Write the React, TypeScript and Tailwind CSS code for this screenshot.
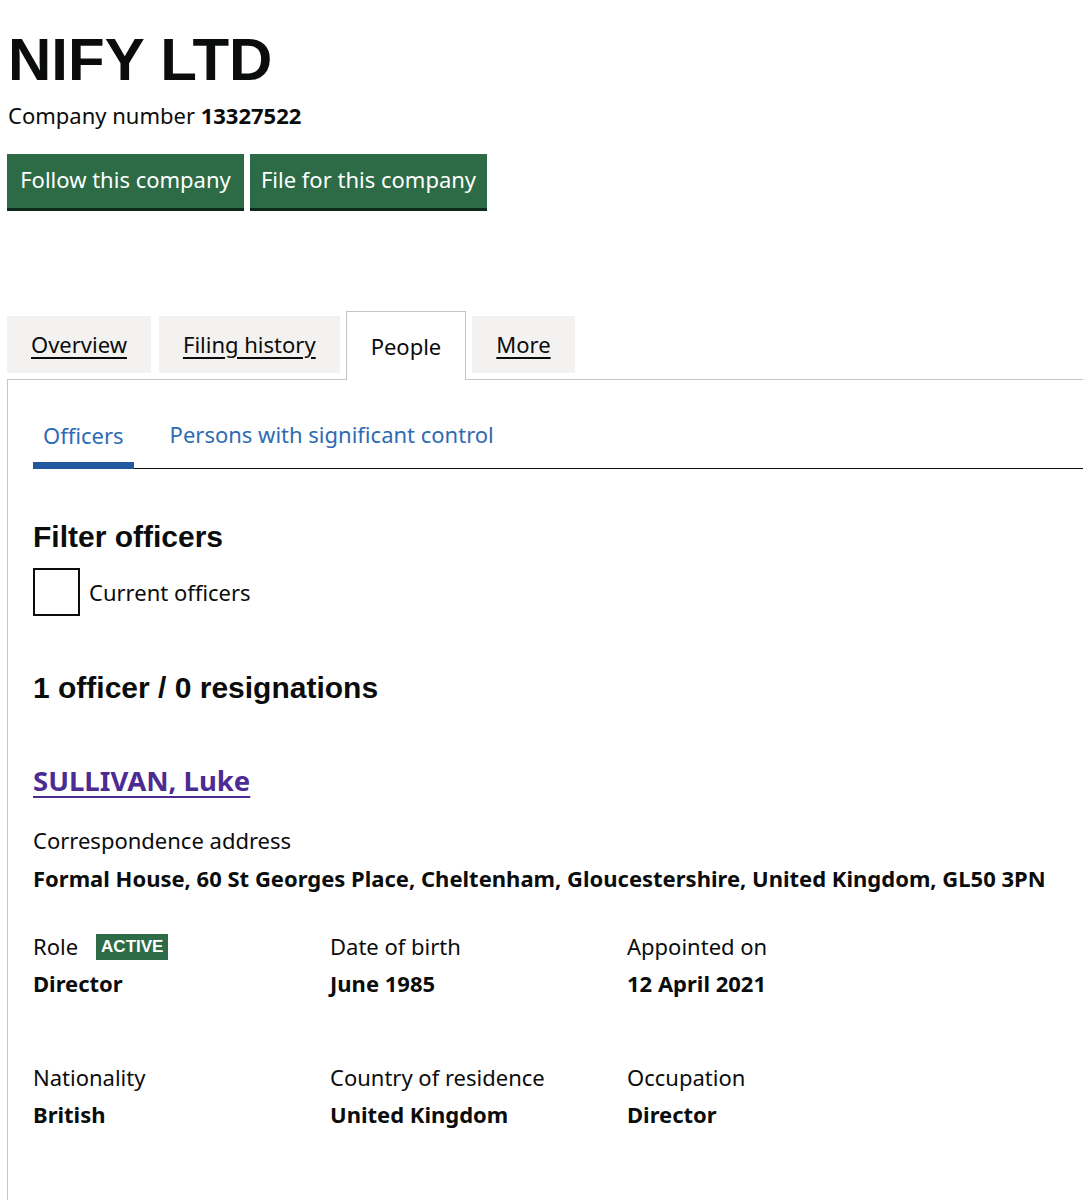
import React from "react";

const body = { fontFamily: '"Noto Sans", "Open Sans", Arial, sans-serif' };
const heading = { fontFamily: '"Liberation Sans", Arial, sans-serif' };

function Detail({ label, value, badge }: { label: string; value: string; badge?: boolean }) {
    return (
        <div>
            <div className="flex items-center gap-[18px] text-[22px] leading-[30px] text-[#0b0c0c]">
                {label}
                {badge && (
                    <span
                        className="mt-[2px] bg-[#2c6b45] px-[5px] text-[17px] font-bold leading-[26px] text-white"
                        style={heading}
                    >
                        ACTIVE
                    </span>
                )}
            </div>
            <div className="mt-[7px] text-[22px] font-bold leading-[30px] text-[#0b0c0c]">{value}</div>
        </div>
    );
}

export default function App() {
    const tabs = ["Overview", "Filing history", "People", "More"];

    return (
        <div className="min-h-[1200px] bg-white pl-[7px] text-[#0b0c0c]" style={body}>
            <h1 className="pt-[30px] pl-[1px] text-[60px] font-bold leading-[60px]" style={heading}>
                NIFY LTD
            </h1>
            <p className="mt-[10px] pl-[1px] text-[22px] leading-[30px]">
                Company number <span className="font-bold">13327522</span>
            </p>

            <div className="mt-[24px] flex gap-[6px]">
                {["Follow this company", "File for this company"].map((label) => (
                    <button
                        key={label}
                        className="h-[54px] w-[237px] bg-[#2c6b45] pb-[3px] text-[22px] text-white shadow-[0_3px_0_#0b2a19]"
                    >
                        {label}
                    </button>
                ))}
            </div>

            {/* tabs */}
            <div className="mt-[103px] flex items-end gap-[6px]">
                {tabs.map((t, i) =>
                    t === "People" ? (
                        <div
                            key={t}
                            className="relative -mb-[1px] flex h-[69px] items-center border-[1.5px] border-b-0 border-[#c6c6c6] bg-white px-[24px] pt-[1px] text-[22px]"
                        >
                            {t}
                        </div>
                    ) : (
                        <div
                            key={t}
                            className={`mb-[6px] flex h-[57px] items-center bg-[#f3f2f1] px-[24px] text-[22px] underline decoration-[1.5px] underline-offset-[4px] ${i === 1 ? "ml-[2px]" : ""}`}
                        >
                            {t}
                        </div>
                    )
                )}
            </div>

            <div className="border-l-[1.5px] border-t-[1.5px] border-[#c6c6c6] pl-[25px] pb-[80px]">
                {/* sub tabs */}
                <div className="mt-[39px] flex items-end border-b border-[#0b0c0c]">
                    <div className="-mb-[1px] border-b-[7px] border-[#22589d] px-[10px] pb-[12px] text-[22px] leading-[30px] text-[#2f6bb4]">
                        Officers
                    </div>
                    <div className="ml-[26px] px-[10px] pb-[19px] text-[22px] leading-[30px] text-[#2f6bb4]">
                        Persons with significant control
                    </div>
                </div>

                <h2 className="mt-[51px] text-[30px] font-bold leading-[34px]" style={heading}>
                    Filter officers
                </h2>
                <label className="mt-[14px] flex items-center gap-[9px]">
                    <span className="block h-[48px] w-[47px] border-[2px] border-[#0b0c0c]" />
                    <span className="text-[22px] leading-[30px]">Current officers</span>
                </label>

                <h2 className="mt-[55px] text-[30px] font-bold leading-[34px]" style={heading}>
                    1 officer / 0 resignations
                </h2>

                <a
                    href="#"
                    className="mt-[59px] inline-block text-[27.5px] font-bold leading-[34px] text-[#4c2c92] underline decoration-[2px] underline-offset-[5px]"
                >
                    SULLIVAN, Luke
                </a>

                <div className="mt-[27px] text-[22px] leading-[30px]">Correspondence address</div>
                <div className="mt-[8px] text-[22px] font-bold leading-[30px]">
                    Formal House, 60 St Georges Place, Cheltenham, Gloucestershire, United Kingdom, GL50 3PN
                </div>

                <div className="mt-[38px] grid w-[891px] grid-cols-3 gap-y-[64px]">
                    <Detail label="Role" value="Director" badge />
                    <Detail label="Date of birth" value="June 1985" />
                    <Detail label="Appointed on" value="12 April 2021" />
                    <Detail label="Nationality" value="British" />
                    <Detail label="Country of residence" value="United Kingdom" />
                    <Detail label="Occupation" value="Director" />
                </div>
            </div>
        </div>
    );
}
